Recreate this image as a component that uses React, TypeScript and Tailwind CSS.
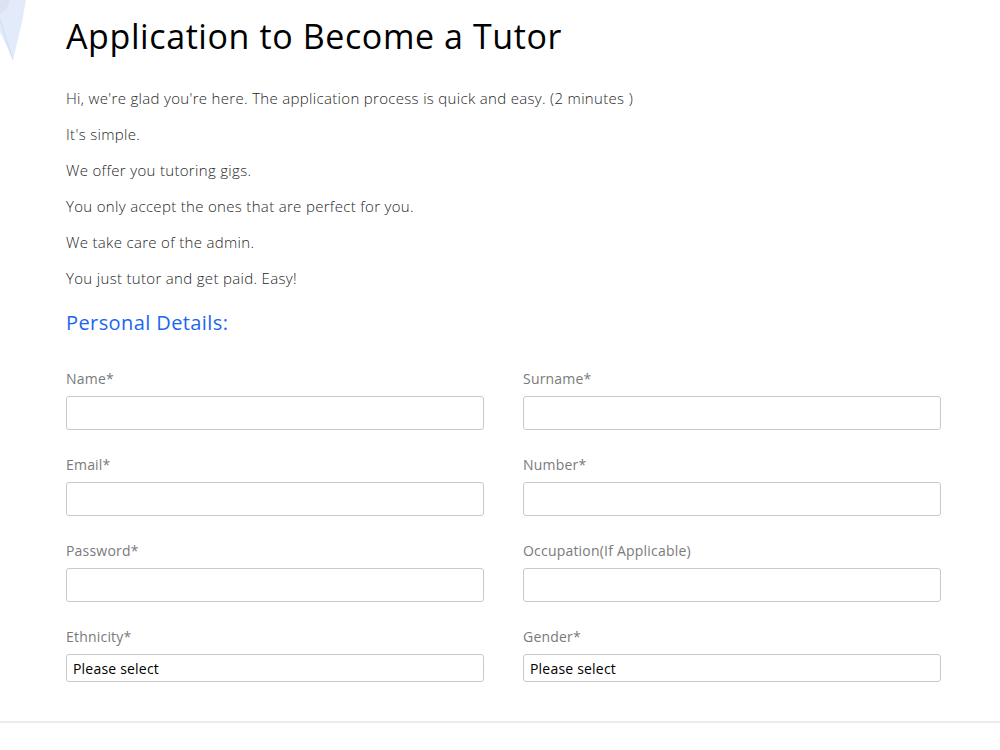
import type { ReactNode } from 'react';

const intro = [
  "Hi, we're glad you're here. The application process is quick and easy. (2 minutes )",
  "It's simple.",
  'We offer you tutoring gigs.',
  'You only accept the ones that are perfect for you.',
  'We take care of the admin.',
  'You just tutor and get paid. Easy!',
];

const font = { fontFamily: '"Open Sans", "Noto Sans", sans-serif' };

const Field = ({ label, children }: { label: string; children: ReactNode }) => (
  <div className="flex flex-col">
    <label className="text-[14px] tracking-[0.2px] text-[#7a7a7a] leading-[20px] mb-[7px]">
      {label}
    </label>
    {children}
  </div>
);

const TextInput = () => (
  <input
    type="text"
    className="h-[34px] w-full rounded-[3px] border border-[#c9c9c9] bg-white px-2 text-sm outline-none"
  />
);

const Select = () => (
  <select className="h-[28px] w-full appearance-none rounded-[3px] border border-[#c9c9c9] bg-white px-[6px] text-[14px] tracking-[0.2px] text-black outline-none">
    <option>Please select</option>
  </select>
);

const PlaneCorner = () => (
  <svg className="absolute left-0 top-0" width="40" height="70" viewBox="0 0 40 70">
    <polygon points="0,0 26,0 22,22 13,60 0,32" fill="#e3ebfb" />
    <polygon points="0,0 10,0 6,10 0,14" fill="#d5dcea" opacity="0.6" />
    <line x1="0" y1="20" x2="13" y2="60" stroke="#cddcf7" strokeWidth="1" />
  </svg>
);

export default function App() {
  return (
    <div className="relative min-h-[750px] bg-white" style={font}>
      <PlaneCorner />
      <div className="px-[66px] pt-[14px] pb-[39px] w-[1007px]">
        <h1 className="text-[34px] font-medium tracking-[0.6px] leading-[44px] text-black">
          Application to Become a Tutor
        </h1>

        <div className="mt-[22px] flex flex-col text-[15px] font-light tracking-[0.32px] text-[#1f1f1f]">
          {intro.map((line) => (
            <p key={line} className="leading-[36px]">
              {line}
            </p>
          ))}
        </div>

        <h2 className="mt-[12px] text-[20px] font-medium tracking-[0.4px] leading-[30px] text-[#1a66f0]">
          Personal Details:
        </h2>

        <div className="mt-[31px] grid grid-cols-2 gap-x-[39px] gap-y-[25px]">
          <Field label="Name*">
            <TextInput />
          </Field>
          <Field label="Surname*">
            <TextInput />
          </Field>
          <Field label="Email*">
            <TextInput />
          </Field>
          <Field label="Number*">
            <TextInput />
          </Field>
          <Field label="Password*">
            <TextInput />
          </Field>
          <Field label="Occupation(If Applicable)">
            <TextInput />
          </Field>
          <Field label="Ethnicity*">
            <Select />
          </Field>
          <Field label="Gender*">
            <Select />
          </Field>
        </div>
      </div>
      <div className="h-[2px] w-full bg-[#ececec]" />
    </div>
  );
}
